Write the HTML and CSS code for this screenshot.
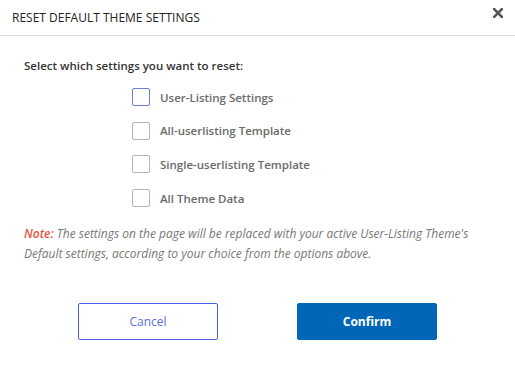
FILE: index.html
```html
<!DOCTYPE html>
<html lang="en">
<head>
  <meta charset="UTF-8">
  <title>Reset Default Theme Settings</title>
  <link rel="stylesheet" href="styles.css">
</head>
<body>
  <div class="modal">
    <div class="modal-header">
      <h2>RESET DEFAULT THEME SETTINGS</h2>
      <svg class="close" width="10" height="10" viewBox="0 0 10 10">
        <path d="M1 1L9 9M9 1L1 9" stroke="#555" stroke-width="2.6" stroke-linecap="square"/>
      </svg>
    </div>

    <div class="modal-body">
      <p class="lead">Select which settings you want to reset:</p>

      <div class="options">
        <label class="option"><span class="box focus"></span>User-Listing Settings</label>
        <label class="option"><span class="box"></span>All-userlisting Template</label>
        <label class="option"><span class="box"></span>Single-userlisting Template</label>
        <label class="option"><span class="box"></span>All Theme Data</label>
      </div>

      <p class="note"><b>Note:</b> The settings on the page will be replaced with your active User-Listing Theme's Default settings, according to your choice from the options above.</p>

      <div class="actions">
        <button class="btn-cancel">Cancel</button>
        <button class="btn-confirm">Confirm</button>
      </div>
    </div>
  </div>
</body>
</html>
```

FILE: styles.css
```css
* { box-sizing: border-box; }
body {
  margin: 0;
  font-family: 'Open Sans', 'Noto Sans', sans-serif;
  background: #fff;
  color: #333;
  width: 515px;
  height: 366px;
}

.modal {
  width: 515px;
}

.modal-header {
  display: flex;
  justify-content: space-between;
  align-items: center;
  height: 36px;
  padding: 0 12px;
  border-bottom: 1px solid #ddd;
}

.modal-header h2 {
  margin: 0;
  font-size: 12px;
  font-weight: 400;
  color: #222;
}

.close {
  margin-top: -9px;
  margin-right: 0;
}

.modal-body {
  padding: 21px 24px 0;
}

.lead {
  margin: 0 0 14px;
  font-size: 11.5px;
  line-height: 17px;
  font-weight: 600;
  color: #333;
}

.options {
  display: flex;
  flex-direction: column;
  gap: 15.7px;
  padding-left: 108px;
}

.option {
  display: flex;
  align-items: center;
  gap: 10px;
  height: 18px;
  font-size: 11.5px;
  font-weight: 600;
  color: #6a6a6a;
}

.box {
  width: 18px;
  height: 18px;
  border: 1px solid #b4b4b4;
  border-radius: 2px;
  background: #fff;
}

.box.focus { border-color: #6b7fd9; }

.note {
  margin: 17px 0 0;
  max-width: 450px;
  font-size: 12px;
  font-style: italic;
  line-height: 20px;
  color: #777;
}

.note b {
  color: #e8553e;
  font-weight: 600;
}

.actions {
  display: flex;
  gap: 79px;
  padding-left: 54px;
  margin-top: 39px;
}

.actions button {
  width: 140px;
  height: 37px;
  font-family: inherit;
  font-size: 12px;
  border-radius: 2px;
  cursor: pointer;
}

.btn-cancel {
  background: #fff;
  border: 1px solid #4a5ee8;
  color: #5a6ee0;
}

.btn-confirm {
  background: #0067b8;
  border: 1px solid #0067b8;
  color: #fff;
  font-weight: 700;
}
```
